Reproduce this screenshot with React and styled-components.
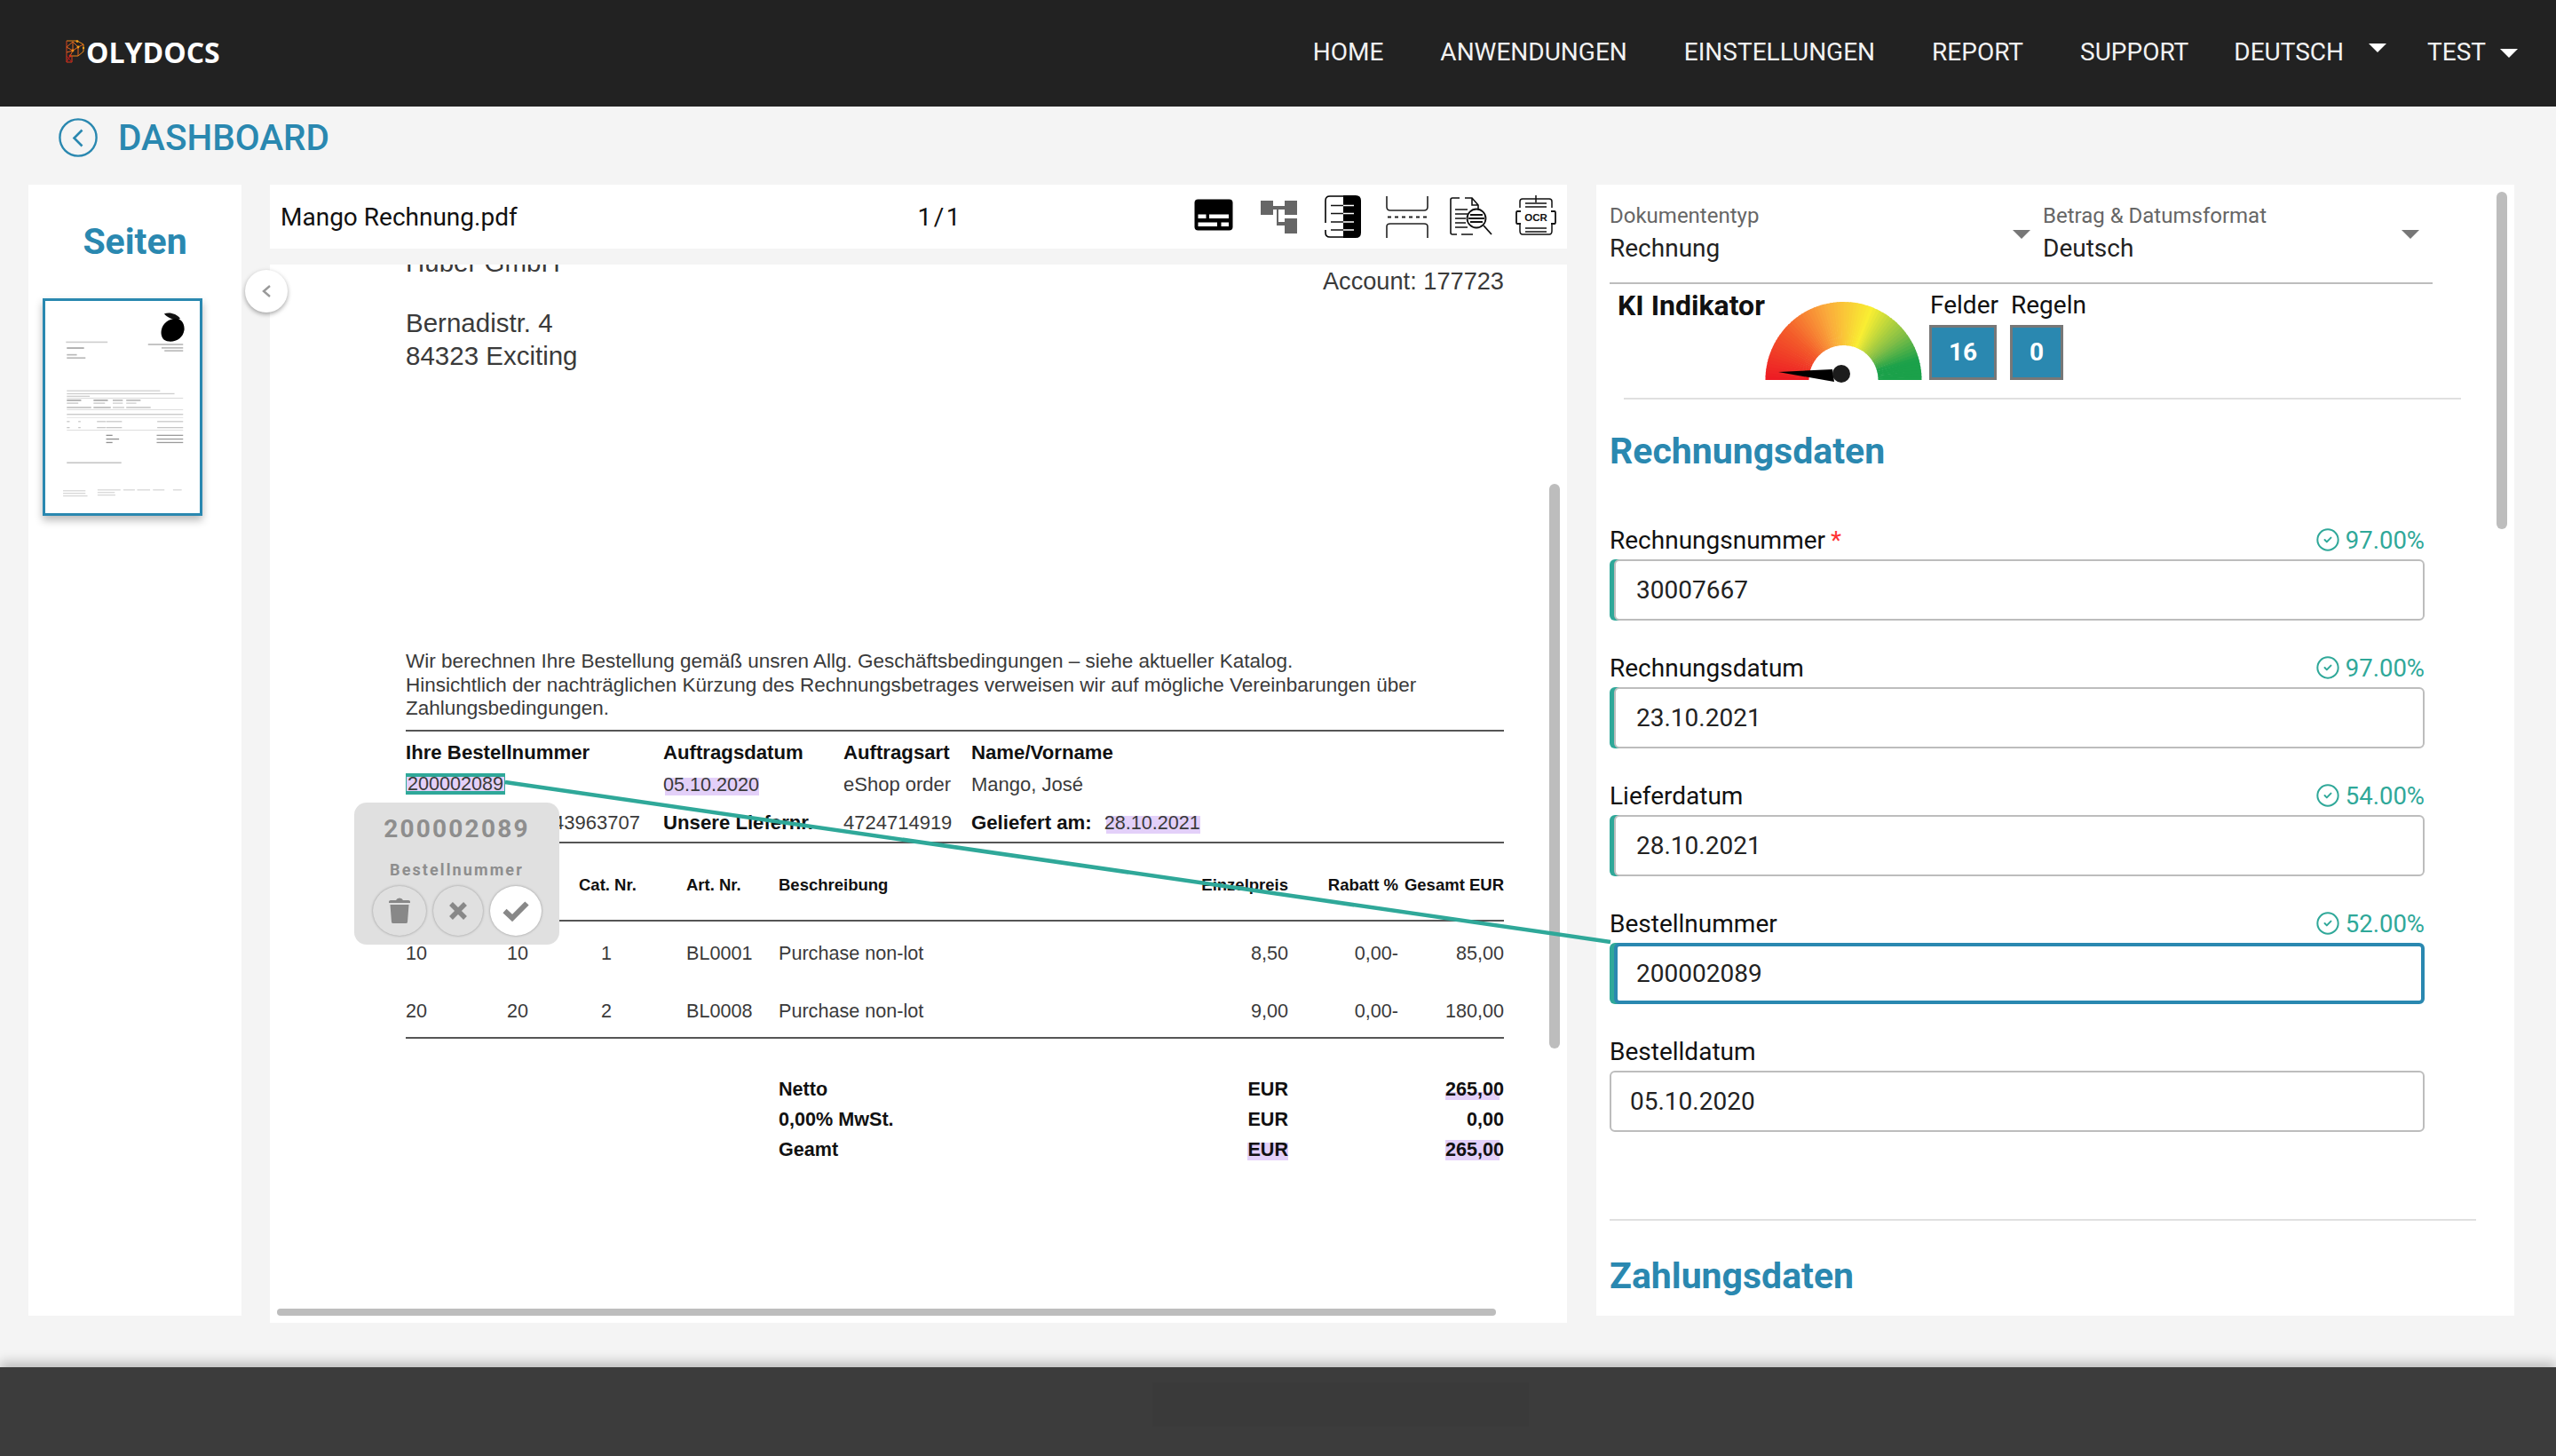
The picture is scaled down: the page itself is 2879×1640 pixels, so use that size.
import React from 'react'
import styled, {createGlobalStyle} from 'styled-components'
import {CircleCheck} from 'lucide-react'

const BLUE = '#2a88b0'
const TEAL = '#2fa899'

const GlobalStyle = createGlobalStyle`
  html, body {
    margin: 0;
    padding: 0;
    background: #f4f4f4;
  }
  * {
    box-sizing: border-box;
  }
`

const Page = styled.div`
  position: relative;
  width: 2879px;
  height: 1640px;
  overflow: hidden;
  display: flex;
  flex-direction: column;
  background: #f4f4f4;
  font-family: Roboto, sans-serif;
`

const Header = styled.header`
  height: 120px;
  flex: none;
  background: #222;
  display: flex;
  align-items: center;
  justify-content: space-between;
  padding: 0 43px 4px 74px;
`
const Logo = styled.div`
  display: flex;
  align-items: center;
  gap: 1px;
  color: #fff;
  font-family: 'Open Sans', sans-serif;
  font-weight: 700;
  font-size: 32px;
`
const Nav = styled.nav`
  display: flex;
  align-items: center;
  gap: 64px;
`
const NavItem = styled.a`
  display: flex;
  align-items: center;
  gap: ${(p) => p.$gap || 0}px;
  color: #f2f2f2;
  font-size: 28px;
`
const NavCaret = styled.span`
  width: 0;
  height: 0;
  border-left: 10px solid transparent;
  border-right: 10px solid transparent;
  border-top: 10px solid #fff;
  transform: translateY(${(p) => p.$dy}px);
`
const NavMenus = styled.div`
  display: flex;
  gap: 46px;
  margin-left: -13px;
`

const TitleRow = styled.div`
  height: 88px;
  flex: none;
  display: flex;
  align-items: center;
  gap: 23px;
  padding: 0 0 18px 66px;
  color: ${BLUE};
  font-size: 40.5px;
  font-weight: 500;
`

const Main = styled.main`
  flex: none;
  display: flex;
  align-items: flex-start;
  padding-left: 32px;
`
const Sidebar = styled.aside`
  width: 240px;
  height: 1274px;
  margin-right: 32px;
  background: #fff;
  padding: 42px 16px 0;
  display: flex;
  flex-direction: column;
  align-items: center;
`
const SidebarTitle = styled.h2`
  margin: 0 0 42px;
  font-size: 41px;
  line-height: 44px;
  font-weight: 700;
  color: ${BLUE};
`
const Thumb = styled.div`
  width: 180px;
  height: 245px;
  flex: none;
  align-self: flex-start;
  border: 3px solid ${BLUE};
  box-shadow: 0 5px 9px rgba(0, 0, 0, 0.28);
  background: #fff;
  overflow: hidden;
`
const ThumbSvg = styled.svg`
  display: block;
  filter: blur(0.5px);
`

const DocColumn = styled.section`
  position: relative;
  width: 1461px;
  margin-right: 33px;
  display: flex;
  flex-direction: column;
  gap: 18px;
`
const Toolbar = styled.div`
  height: 72px;
  background: #fff;
  display: grid;
  grid-template-columns: 1fr 1fr;
  align-items: center;
  padding: 0 12px;
  font-size: 28px;
  color: #111;
`
const ToolbarLeft = styled.div`
  display: flex;
  justify-content: space-between;
`
const PageCount = styled.span`
  margin-right: -47px;
  word-spacing: -4.5px;
`
const ToolIcons = styled.div`
  display: flex;
  align-items: center;
  justify-content: flex-end;
`
const ToolIcon = styled.svg`
  display: block;
  margin-left: ${(p) => p.$ml}px;
  margin-top: ${(p) => p.$mt || 0}px;
  flex: none;
`
const DocView = styled.div`
  position: relative;
  height: 1192px;
  background: #fff;
  overflow: hidden;
`
const CollapseButton = styled.button`
  position: absolute;
  left: -28px;
  top: 96px;
  width: 48px;
  height: 48px;
  padding: 0;
  border: 0;
  border-radius: 50%;
  background: #fff;
  box-shadow: 0 2px 5px rgba(0, 0, 0, 0.35);
  display: flex;
  align-items: center;
  justify-content: center;
`
const ScrollV = styled.div`
  position: absolute;
  left: 1441px;
  top: 247px;
  width: 12px;
  height: 636px;
  border-radius: 6px;
  background: #bdbdbd;
`
const ScrollH = styled.div`
  position: absolute;
  left: 8px;
  bottom: 8px;
  width: 1373px;
  height: 8px;
  border-radius: 4px;
  background: #bdbdbd;
`

const Paper = styled.div`
  margin-top: -21px;
  padding: 0 71px 0 153px;
  font-family: 'Liberation Sans', Arial, sans-serif;
  color: #3a3a3a;
`
const AddressRow = styled.div`
  display: flex;
  justify-content: space-between;
  font-size: 29.5px;
  line-height: 37px;
`
const Address = styled.div`
  display: flex;
  flex-direction: column;
`
const AddressGap = styled.div`
  height: 31px;
`
const Account = styled.div`
  padding-top: 21px;
  font-size: 27.2px;
  line-height: 37px;
`
const Paragraph = styled.p`
  margin: 313px 0 0;
  font-size: 22.5px;
  line-height: 26.5px;
`
const Rule = styled.div`
  height: 2px;
  background: #555;
  margin-top: ${(p) => p.$mt || 0}px;
`
const InfoGrid = styled.div`
  display: grid;
  grid-template-columns: 290px 203px 144px 1fr;
  grid-auto-rows: 30px;
  row-gap: ${(p) => p.$rowGap || 0}px;
  margin-top: ${(p) => p.$mt}px;
  font-size: 22px;
  line-height: 30px;
  white-space: nowrap;
`
const InfoBold = styled.b`
  color: #111;
  font-weight: 700;
  font-size: 22.2px;
`
const Split = styled.div`
  display: flex;
  justify-content: space-between;
  width: 264px;
`
const DeliveredOn = styled.div`
  display: flex;
  gap: 14px;
`
// purple field highlight, sits a little below the glyphs as in the pdf layer
const Mark = styled.span`
  font-size: 21.6px;
  background: linear-gradient(#e3d0f9, #e3d0f9) no-repeat 2px 100% / 100% 20px;
`
const TotalMark = styled.span`
  background: linear-gradient(#e3d0f9, #e3d0f9) no-repeat 0 100% / ${(p) => p.$w} ${(p) => p.$h}px;
`
const SelectedMark = styled.span`
  display: inline-block;
  height: 24px;
  line-height: 15px;
  padding: 0 1px;
  font-size: 21.6px;
  background: #e3d0f9;
  border: solid ${TEAL};
  border-width: 4px 1px;
  vertical-align: middle;
  margin-top: -3px;
`
const LineTable = styled.div`
  display: grid;
  grid-template-columns: 114px 81px 121px 104px 454px 120px 124px 119px;
  font-size: 21.6px;
  white-space: nowrap;
`
const HeadCell = styled.div`
  height: 86px;
  padding-top: 8px;
  display: flex;
  align-items: center;
  justify-content: ${(p) => (p.$end ? 'flex-end' : 'flex-start')};
  font-size: 18.5px;
  font-weight: 700;
  color: #111;
`
const Cell = styled.div`
  height: ${(p) => p.$h}px;
  padding-left: ${(p) => p.$pl || 0}px;
  display: flex;
  align-items: center;
  justify-content: ${(p) => (p.$end ? 'flex-end' : 'flex-start')};
`
const TableRule = styled.div`
  grid-column: 1 / -1;
  height: 2px;
  background: #555;
`
const Totals = styled.div`
  display: grid;
  grid-template-columns: 474px 100px 243px;
  grid-auto-rows: 34px;
  margin-top: 40px;
  padding-left: 420px;
  font-size: 21.6px;
  line-height: 34px;
  font-weight: 700;
  color: #111;
`
const TotalValue = styled.div`
  text-align: right;
`

const Tooltip = styled.div`
  position: absolute;
  left: 95px;
  top: 606px;
  width: 231px;
  height: 160px;
  background: #e0e0e0;
  border-radius: 14px;
  display: flex;
  flex-direction: column;
  align-items: center;
  color: #8e8e8e;
  font-family: Roboto, sans-serif;
  font-weight: 700;
`
const TooltipValue = styled.div`
  margin-top: 12px;
  font-size: 28px;
  line-height: 36px;
  letter-spacing: 2.2px;
`
const TooltipLabel = styled.div`
  margin-top: 16px;
  font-size: 18px;
  line-height: 24px;
  letter-spacing: 2.1px;
`
const TooltipActions = styled.div`
  display: flex;
  gap: 8px;
  margin-top: 6px;
`
const RoundButton = styled.button`
  width: ${(p) => p.$size}px;
  height: 56px;
  padding: 0;
  border: 0;
  border-radius: 50%;
  background: ${(p) => (p.$light ? '#fff' : '#e0e0e0')};
  box-shadow: 0 0 3px rgba(0, 0, 0, 0.35);
  display: flex;
  align-items: center;
  justify-content: center;
`

const FormPanel = styled.section`
  position: relative;
  width: 1034px;
  height: 1274px;
  background: #fff;
  overflow: hidden;
  padding: 20px 0 0 15px;
`
const FormScrollbar = styled.div`
  position: absolute;
  left: 1014px;
  top: 8px;
  width: 12px;
  height: 380px;
  border-radius: 6px;
  background: #bdbdbd;
`
const SelectRow = styled.div`
  width: 927px;
  height: 92px;
  border-bottom: 2px solid #bdbdbd;
  display: flex;
`
const SelectBox = styled.div`
  position: relative;
  width: ${(p) => p.$w}px;
`
const SelectLabel = styled.div`
  font-size: 24px;
  line-height: 30px;
  color: #666;
`
const SelectValue = styled.div`
  margin-top: 4px;
  font-size: 28px;
  line-height: 36px;
  color: #222;
`
const SelectCaret = styled.span`
  position: absolute;
  left: ${(p) => p.$left}px;
  top: 31px;
  width: 0;
  height: 0;
  border-left: 10px solid transparent;
  border-right: 10px solid transparent;
  border-top: 10px solid #777;
`
const KiRow = styled.div`
  display: flex;
  align-items: flex-start;
  height: 128px;
  padding-left: 9px;
`
const KiLabel = styled.div`
  width: 166px;
  padding-top: 6px;
  font-size: 32px;
  line-height: 36px;
  font-weight: 700;
  color: #111;
`
const Gauge = styled.svg`
  display: block;
  margin-top: 20px;
  overflow: visible;
  flex: none;
`
const StatCol = styled.div`
  display: flex;
  flex-direction: column;
  align-items: flex-start;
  margin-left: ${(p) => p.$ml}px;
  padding-top: 6px;
  font-size: 28px;
  line-height: 36px;
  color: #111;
`
const StatName = styled.span`
  padding-left: 1px;
`
const StatBox = styled.div`
  width: ${(p) => p.$w}px;
  height: 62px;
  margin-top: 4px;
  border: 3px solid #777;
  background: ${BLUE};
  color: #fff;
  font-weight: 700;
  font-size: 28px;
  line-height: 56px;
  text-align: center;
`
const Divider = styled.div`
  height: 2px;
  background: #e0e0e0;
  margin-left: ${(p) => p.$ml || 0}px;
  margin-top: ${(p) => p.$mt || 0}px;
  width: ${(p) => p.$w}px;
`
const SectionTitle = styled.h2`
  margin: ${(p) => p.$mt}px 0 0;
  font-size: 41px;
  line-height: 48px;
  font-weight: 700;
  color: ${BLUE};
`
const Fields = styled.div`
  margin-top: 58px;
  width: 918px;
  display: flex;
  flex-direction: column;
  gap: 35px;
`
const FieldHead = styled.div`
  height: 36px;
  margin-bottom: 4px;
  display: flex;
  align-items: center;
  justify-content: space-between;
  font-size: 28px;
  color: #111;
`
const Required = styled.span`
  margin-left: 6px;
  color: #f33;
`
const Confidence = styled.span`
  display: flex;
  align-items: center;
  gap: 6px;
  color: ${TEAL};
  font-size: 27.5px;
`
const FieldInput = styled.input`
  display: block;
  width: ${(p) => (p.$accent ? 'calc(100% - 5px)' : '100%')};
  height: 69px;
  margin-left: ${(p) => (p.$accent ? 5 : 0)}px;
  padding: 0 0 0 ${(p) => (p.$active ? 21 : p.$accent ? 23 : 21)}px;
  border: ${(p) => (p.$active ? `4px solid ${BLUE}` : '2px solid #bdbdbd')};
  border-radius: 6px;
  box-shadow: ${(p) => (p.$accent ? `-5px 0 0 ${TEAL}` : 'none')};
  outline: none;
  background: #fff;
  font-family: Roboto, sans-serif;
  font-size: 28px;
  color: #222;
`

const Footer = styled.footer`
  margin-top: auto;
  height: 100px;
  flex: none;
  background: #3c3c3c;
  box-shadow: 0 -6px 12px rgba(0, 0, 0, 0.22);
  padding: 17px 0 0 1298px;
`
const FooterBlock = styled.div`
  width: 424px;
  height: 50px;
  background: #3a3a3a;
`
const Connector = styled.svg`
  position: absolute;
  left: 0;
  top: 0;
  pointer-events: none;
`

const fields = [
  {label: 'Rechnungsnummer', value: '30007667', conf: '97.00%', required: true},
  {label: 'Rechnungsdatum', value: '23.10.2021', conf: '97.00%'},
  {label: 'Lieferdatum', value: '28.10.2021', conf: '54.00%'},
  {label: 'Bestellnummer', value: '200002089', conf: '52.00%', active: true},
  {label: 'Bestelldatum', value: '05.10.2020'},
]

const tableHead = ['Pos. Nr.', 'Menge', 'Cat. Nr.', 'Art. Nr.', 'Beschreibung', 'Einzelpreis', 'Rabatt %', 'Gesamt EUR']

const lineItems = [
  {h: 72, cells: ['10', '10', '1', 'BL0001', 'Purchase non-lot', '8,50', '0,00-', '85,00']},
  {h: 58, cells: ['20', '20', '2', 'BL0008', 'Purchase non-lot', '9,00', '0,00-', '180,00']},
]

// gauge colours, sampled along the arc from left to right
const stops = [
  [0, [237, 28, 36]],
  [0.22, [243, 90, 42]],
  [0.42, [250, 170, 60]],
  [0.62, [249, 238, 50]],
  [0.8, [130, 190, 70]],
  [0.92, [27, 161, 74]],
  [1, [27, 161, 74]],
]
const mix = (t) => {
  let i = 0
  while (i < stops.length - 2 && t > stops[i + 1][0]) i++
  const [t0, a] = stops[i]
  const [t1, b] = stops[i + 1]
  const k = Math.min(1, (t - t0) / (t1 - t0))
  return `rgb(${a.map((v, j) => Math.round(v + (b[j] - v) * k)).join(',')})`
}
const gaugeSegments = Array.from({length: 72}, (_, i) => {
  const a0 = Math.PI - (i / 72) * Math.PI
  const a1 = Math.PI - ((i + 1.25) / 72) * Math.PI
  const pt = (r, a) => `${(88.5 + r * Math.cos(a)).toFixed(2)} ${(88 - r * Math.sin(a)).toFixed(2)}`
  return {
    d: `M${pt(88, a0)} A88 88 0 0 1 ${pt(88, Math.max(a1, 0))} L${pt(39, Math.max(a1, 0))} A39 39 0 0 0 ${pt(39, a0)} Z`,
    fill: mix(i / 71),
  }
})

const GaugeChart = () => (
  <Gauge width="177" height="92" viewBox="0 0 177 92">
    {gaugeSegments.map((s, i) => (
      <path key={i} d={s.d} fill={s.fill} />
    ))}
    <polygon points="15,79 76,76 78,90" fill="#000" />
    <circle cx="86" cy="81" r="10" fill="#1c1c1c" />
  </Gauge>
)

const LogoMark = () => (
  <svg width="22" height="26" viewBox="0 0 22 26" fill="none" strokeWidth="1">
    <path d="M1 1H13L20 5V13L14 18H5" stroke="#ee8a1a" />
    <path d="M1 1V25H7V18" stroke="#d8401c" />
    <path d="M1 8L8 2L14 8L20 5M8 2V12L14 8V18M1 14L8 12L5 18M1 8L8 12" stroke="#e8661c" />
    <path d="M1 18L7 25M1 25L5 18" stroke="#c9151b" />
    <circle cx="8" cy="12" r="1.4" fill="#f0901a" />
    <circle cx="14" cy="8" r="1.4" fill="#f5a01a" />
    <circle cx="13" cy="1.6" r="1.4" fill="#f5a01a" />
    <circle cx="20" cy="9" r="1.2" fill="#f5a01a" />
    <circle cx="5" cy="18" r="1.4" fill="#d8301c" />
  </svg>
)

const BackIcon = () => (
  <svg width="44" height="44" viewBox="0 0 44 44" fill="none" stroke={BLUE} strokeWidth="2.4">
    <circle cx="22" cy="22" r="20.6" />
    <path d="M26.5 13.5L17.5 22.5L26.5 31.5" strokeWidth="2.6" />
  </svg>
)

const thumbLines = [
  [72, 140, 145, 5, 0.22],
  [75, 160, 60, 6, 0.35],
  [358, 148, 122, 5, 0.32],
  [405, 160, 75, 5, 0.32],
  [415, 170, 65, 5, 0.32],
  [75, 184, 35, 5, 0.32],
  [75, 195, 65, 5, 0.32],
  [75, 310, 325, 4, 0.22],
  [75, 320, 375, 4, 0.22],
  [75, 329, 80, 4, 0.22],
  [75, 336, 405, 1.5, 0.35],
  [75, 343, 50, 4, 0.5],
  [168, 343, 50, 4, 0.5],
  [235, 343, 35, 4, 0.4],
  [282, 343, 50, 4, 0.4],
  [75, 353, 40, 4, 0.26],
  [168, 353, 40, 4, 0.26],
  [235, 353, 35, 4, 0.22],
  [282, 353, 35, 4, 0.22],
  [75, 368, 85, 4, 0.35],
  [168, 368, 60, 4, 0.4],
  [235, 368, 40, 4, 0.26],
  [282, 368, 85, 4, 0.3],
  [75, 377, 405, 1.5, 0.3],
  [75, 392, 405, 4, 0.26],
  [75, 405, 405, 1.5, 0.22],
  [75, 417, 10, 4, 0.26],
  [115, 417, 8, 4, 0.26],
  [180, 417, 30, 4, 0.26],
  [212, 417, 55, 4, 0.26],
  [390, 417, 90, 4, 0.26],
  [75, 438, 10, 4, 0.26],
  [115, 438, 8, 4, 0.26],
  [180, 438, 30, 4, 0.26],
  [212, 438, 55, 4, 0.26],
  [390, 438, 90, 4, 0.26],
  [75, 448, 405, 1.5, 0.3],
  [212, 465, 22, 4, 0.5],
  [388, 465, 92, 4, 0.45],
  [212, 478, 45, 4, 0.5],
  [388, 478, 92, 4, 0.45],
  [212, 490, 22, 4, 0.5],
  [388, 490, 92, 4, 0.45],
  [75, 560, 190, 5, 0.26],
  [62, 658, 78, 4, 0.18],
  [62, 667, 78, 4, 0.18],
  [62, 676, 85, 4, 0.18],
  [182, 655, 80, 4, 0.18],
  [182, 664, 60, 4, 0.18],
  [182, 673, 62, 4, 0.18],
  [272, 655, 40, 4, 0.18],
  [320, 655, 45, 4, 0.18],
  [375, 655, 40, 4, 0.18],
  [445, 655, 30, 4, 0.18],
]

const ThumbPicture = () => (
  <ThumbSvg width="174" height="239" viewBox="0 0 538 737">
    <path d="M414 44C430 36 456 42 470 60C456 68 430 62 414 44Z" fill="#111" />
    <path d="M452 60C472 58 486 76 484 100C480 126 458 142 430 140C408 138 400 118 405 98C410 76 430 62 452 60Z" fill="#000" />
    {thumbLines.map(([x, y, w, h, o], i) => (
      <rect key={i} x={x} y={y} width={w} height={h} fill="#222" opacity={o} />
    ))}
  </ThumbSvg>
)

const CaptionIcon = () => (
  <ToolIcon $ml={0} $mt={-5} width="44" height="36" viewBox="0 0 44 36">
    <rect x="0.5" y="0.5" width="43" height="35" rx="4" fill="#000" />
    <path d="M4.5 17.5H13.5V22H4.5ZM17 17.5H39V22H17ZM4.5 26.5H26V31H4.5ZM30.5 26.5H39V31H30.5Z" fill="#fff" />
  </ToolIcon>
)
const TreeIcon = () => (
  <ToolIcon $ml={31} width="42" height="37" viewBox="0 0 42 37" fill="#666">
    <path d="M0 0H14V16H0ZM27 0H41V16H27ZM27 20H41V37H27Z" />
    <path d="M14 6H27V10H20V24H27V28H18V10H14Z" />
  </ToolIcon>
)
const SplitPageIcon = () => (
  <ToolIcon $ml={30} width="41" height="48" viewBox="0 0 41 48">
    <path d="M21 0H35Q41 0 41 6V42Q41 48 35 48H21Z" fill="#000" />
    <path d="M21 1H6Q1 1 1 6V31M1 39V42Q1 47 6 47H21" fill="none" stroke="#000" strokeWidth="1.6" />
    <path d="M7 11.5H21M7 20.5H21M7 30H21M7 39H21" stroke="#111" strokeWidth="1.6" />
    <path d="M21 11.5H33M21 20.5H33M21 30H33M21 39H33" stroke="#fff" strokeWidth="1.6" />
  </ToolIcon>
)
const PageBreakIcon = () => (
  <ToolIcon $ml={28} width="48" height="47" viewBox="0 0 48 47" fill="none" stroke="#222" strokeWidth="1.6">
    <path d="M1 0V12Q1 16 5 16H43Q47 16 47 12V0" />
    <path d="M2 23.5H47" strokeDasharray="4 4" strokeWidth="1.8" />
    <path d="M1 47V34Q1 31 5 31H43Q47 31 47 34V47" />
  </ToolIcon>
)
const DocSearchIcon = () => (
  <ToolIcon $ml={24} width="48" height="45" viewBox="0 0 48 45" fill="none" stroke="#111" strokeWidth="1.6">
    <path d="M11 1H3Q1 1 1 3V40Q1 42 3 42H8M13 42H26M17 1H25L32 9V14M25 1V9H32" />
    <path d="M6 14H20M6 19H20M6 24H18M6 29H18M6 34H20" />
    <circle cx="30" cy="24" r="10.5" strokeWidth="1.8" />
    <path d="M23 20H37M21 24H39M23 28H37" strokeWidth="2" />
    <path d="M38 32L47 42" strokeWidth="1.8" />
  </ToolIcon>
)
const OcrIcon = () => (
  <ToolIcon $ml={26} $mt={-3} width="46" height="46" viewBox="0 0 46 46" fill="none" stroke="#111" strokeWidth="1.5">
    <path d="M5 14V7Q5 4 8 4H38Q41 4 41 7V14M5 32V40Q5 44 8 44H38Q41 44 41 40V32" />
    <path d="M23 0V8M11 9H35M11 13H35M11 37H35M11 41H35" />
    <path d="M6 18H2Q1 18 1 20V30Q1 32 2 32H6M40 18H44Q45 18 45 20V30Q45 32 44 32H40" strokeWidth="1.8" />
    <text x="23" y="29" textAnchor="middle" fontFamily="'Liberation Sans', sans-serif" fontWeight="700" fontSize="11.5" fill="#111" stroke="none">
      OCR
    </text>
  </ToolIcon>
)

const TrashIcon = () => (
  <svg width="24" height="30" viewBox="0 0 24 30" fill="#888">
    <path d="M0 4.5Q0 3 2 3H8Q9 0.5 12 0.5Q15 0.5 16 3H22Q24 3 24 4.5V6H0ZM1.5 8H22.5L21 27.5Q21 29 19 29H5Q3 29 3 27.5Z" />
  </svg>
)
const CrossIcon = () => (
  <svg width="22" height="22" viewBox="0 0 22 22" fill="none" stroke="#888" strokeWidth="5.5">
    <path d="M3 3L19 19M19 3L3 19" />
  </svg>
)
const TickIcon = () => (
  <svg width="30" height="24" viewBox="0 0 30 24" fill="none" stroke="#888" strokeWidth="6">
    <path d="M2.5 12L11 20L27.5 3.5" />
  </svg>
)
const ChevronSmall = () => (
  <svg width="12" height="16" viewBox="0 0 12 16" fill="none" stroke="#999" strokeWidth="2.4">
    <path d="M10 2L3 8L10 14" />
  </svg>
)

const App = () => (
  <Page>
    <GlobalStyle />
    <Header>
      <Logo>
        <LogoMark />
        <span>OLYDOCS</span>
      </Logo>
      <Nav>
        <NavItem>HOME</NavItem>
        <NavItem>ANWENDUNGEN</NavItem>
        <NavItem>EINSTELLUNGEN</NavItem>
        <NavItem>REPORT</NavItem>
        <NavItem>SUPPORT</NavItem>
        <NavMenus>
          <NavItem $gap={28}>
            DEUTSCH <NavCaret $dy={-4} />
          </NavItem>
          <NavItem $gap={16}>
            TEST <NavCaret $dy={2} />
          </NavItem>
        </NavMenus>
      </Nav>
    </Header>

    <TitleRow>
      <BackIcon />
      DASHBOARD
    </TitleRow>

    <Main>
      <Sidebar>
        <SidebarTitle>Seiten</SidebarTitle>
        <Thumb>
          <ThumbPicture />
        </Thumb>
      </Sidebar>

      <DocColumn>
        <Toolbar>
          <ToolbarLeft>
            <span>Mango Rechnung.pdf</span>
            <PageCount>1 / 1</PageCount>
          </ToolbarLeft>
          <ToolIcons>
            <CaptionIcon />
            <TreeIcon />
            <SplitPageIcon />
            <PageBreakIcon />
            <DocSearchIcon />
            <OcrIcon />
          </ToolIcons>
        </Toolbar>

        <DocView>
          <Paper>
            <AddressRow>
              <Address>
                <span>Huber GmbH</span>
                <AddressGap />
                <span>Bernadistr. 4</span>
                <span>84323 Exciting</span>
              </Address>
              <Account>Account: 177723</Account>
            </AddressRow>

            <Paragraph>
              Wir berechnen Ihre Bestellung gemäß unsren Allg. Geschäftsbedingungen – siehe aktueller Katalog.
              <br />
              Hinsichtlich der nachträglichen Kürzung des Rechnungsbetrages verweisen wir auf mögliche Vereinbarungen über
              <br />
              Zahlungsbedingungen.
            </Paragraph>
            <Rule $mt={10} />

            <InfoGrid $mt={9} $rowGap={6}>
              <InfoBold>Ihre Bestellnummer</InfoBold>
              <InfoBold>Auftragsdatum</InfoBold>
              <InfoBold>Auftragsart</InfoBold>
              <InfoBold>Name/Vorname</InfoBold>
              <div>
                <SelectedMark>200002089</SelectedMark>
              </div>
              <div>
                <Mark>05.10.2020</Mark>
              </div>
              <div>eShop order</div>
              <div>Mango, José</div>
            </InfoGrid>
            <InfoGrid $mt={13}>
              <Split>
                <InfoBold>Unser Beleg</InfoBold>
                <span>143963707</span>
              </Split>
              <InfoBold>Unsere Liefernr.</InfoBold>
              <div>4724714919</div>
              <DeliveredOn>
                <InfoBold>Geliefert am:</InfoBold>
                <span>
                  <Mark>28.10.2021</Mark>
                </span>
              </DeliveredOn>
            </InfoGrid>
            <Rule $mt={6} />

            <LineTable>
              {tableHead.map((name, i) => (
                <HeadCell key={name} $end={i > 4}>
                  {name}
                </HeadCell>
              ))}
              <TableRule />
              {lineItems.map(({h, cells}) =>
                cells.map((val, i) => (
                  <Cell key={`${cells[0]}-${i}`} $h={h} $end={i > 4} $pl={i === 2 ? 25 : 0}>
                    {val}
                  </Cell>
                )),
              )}
              <TableRule />
            </LineTable>

            <Totals>
              <span>Netto</span>
              <TotalValue>EUR</TotalValue>
              <TotalValue>
                <TotalMark $w="calc(100% - 5px)" $h={9}>
                  265,00
                </TotalMark>
              </TotalValue>

              <span>0,00% MwSt.</span>
              <TotalValue>EUR</TotalValue>
              <TotalValue>0,00</TotalValue>

              <span>Geamt</span>
              <TotalValue>
                <TotalMark $w="100%" $h={20}>
                  EUR
                </TotalMark>
              </TotalValue>
              <TotalValue>
                <TotalMark $w="calc(100% - 5px)" $h={23}>
                  265,00
                </TotalMark>
              </TotalValue>
            </Totals>
          </Paper>

          <ScrollV />
          <ScrollH />

          <Tooltip>
            <TooltipValue>200002089</TooltipValue>
            <TooltipLabel>Bestellnummer</TooltipLabel>
            <TooltipActions>
              <RoundButton $size={60}>
                <TrashIcon />
              </RoundButton>
              <RoundButton $size={56}>
                <CrossIcon />
              </RoundButton>
              <RoundButton $size={58} $light>
                <TickIcon />
              </RoundButton>
            </TooltipActions>
          </Tooltip>
        </DocView>

        <CollapseButton>
          <ChevronSmall />
        </CollapseButton>
      </DocColumn>

      <FormPanel>
        <FormScrollbar />
        <SelectRow>
          <SelectBox $w={488}>
            <SelectLabel>Dokumententyp</SelectLabel>
            <SelectValue>Rechnung</SelectValue>
            <SelectCaret $left={454} />
          </SelectBox>
          <SelectBox $w={438}>
            <SelectLabel>Betrag &amp; Datumsformat</SelectLabel>
            <SelectValue>Deutsch</SelectValue>
            <SelectCaret $left={404} />
          </SelectBox>
        </SelectRow>

        <KiRow>
          <KiLabel>KI Indikator</KiLabel>
          <GaugeChart />
          <StatCol $ml={8}>
            <StatName>Felder</StatName>
            <StatBox $w={76}>16</StatBox>
          </StatCol>
          <StatCol $ml={13}>
            <StatName>Regeln</StatName>
            <StatBox $w={60}>0</StatBox>
          </StatCol>
        </KiRow>
        <Divider $ml={16} $w={943} />

        <SectionTitle $mt={34}>Rechnungsdaten</SectionTitle>

        <Fields>
          {fields.map(({label, value, conf, required, active}) => (
            <div key={label}>
              <FieldHead>
                <span>
                  {label}
                  {required && <Required>*</Required>}
                </span>
                {conf && (
                  <Confidence>
                    <CircleCheck size={28} strokeWidth={1.7} />
                    {conf}
                  </Confidence>
                )}
              </FieldHead>
              <FieldInput readOnly value={value} $accent={Boolean(conf)} $active={active} />
            </div>
          ))}
        </Fields>

        <Divider $w={976} $mt={98} />
        <SectionTitle $mt={38}>Zahlungsdaten</SectionTitle>
      </FormPanel>
    </Main>

    <Footer>
      <FooterBlock />
    </Footer>

    <Connector width="2879" height="1640">
      <line x1="569" y1="881" x2="1814" y2="1061" stroke={TEAL} strokeWidth="4.5" />
    </Connector>
  </Page>
)

export default App
